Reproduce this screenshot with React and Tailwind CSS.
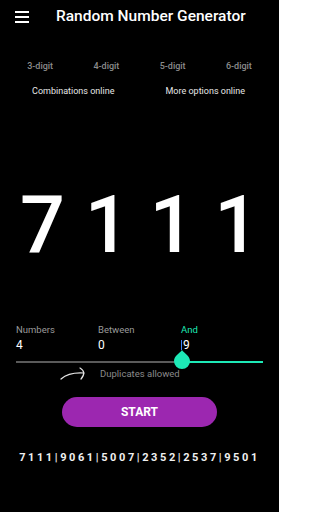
import { useState } from "react";

const tabs = ["3-digit", "4-digit", "5-digit", "6-digit"];
const history = "7111|9061|5007|2352|2537|9501";

function Burger() {
  return (
    <div className="flex w-[14px] flex-col gap-[3px]">
      <span className="h-[2px] bg-white" />
      <span className="h-[2px] bg-white" />
      <span className="h-[2px] bg-white" />
    </div>
  );
}

function Thumb() {
  return (
    <svg width="18" height="20" viewBox="0 0 18 20" className="absolute left-[157px] top-[-11px]">
      <path d="M9 0 C11 3 17 6 17 11 A8 8 0 1 1 1 11 C1 6 7 3 9 0 Z" fill="#1de9b6" />
    </svg>
  );
}

function Arrow() {
  return (
    <svg width="28" height="14" viewBox="0 0 28 14" fill="none" stroke="#e5e5e5" strokeWidth="1.2" strokeLinecap="round">
      <path d="M1 12 Q 9 5 24 6" />
      <path d="M20 1 Q 27 5 21 12" />
    </svg>
  );
}

export default function App() {
  const [digits] = useState(["7", "1", "1", "1"]);

  return (
    <div className="flex h-[512px] w-[279px] flex-col bg-black text-white" style={{ fontFamily: "Roboto, sans-serif" }}>
      <header className="flex h-[33px] items-center pl-[15px]">
        <Burger />
        <h1 className="ml-[27px] text-[15.5px] font-medium">Random Number Generator</h1>
      </header>

      <div className="mt-[27px] grid grid-cols-4 px-[7px] text-center text-[9px] font-medium text-[#8c8c8c]">
        {tabs.map((t) => (
          <span key={t}>{t}</span>
        ))}
      </div>

      <div className="mt-[11px] grid grid-cols-2 text-center text-[9px] text-[#e6e6e6]">
        <span className="pl-[7px]">Combinations online</span>
        <span className="pr-[8px]">More options online</span>
      </div>

      <div className="mt-[88px] grid grid-cols-4 px-[10px] text-center text-[79px] font-medium leading-none">
        {digits.map((d, i) => (
          <span key={i}>{d}</span>
        ))}
      </div>

      <div className="mt-[58px] grid grid-cols-[82px_83px_1fr] px-[16px] text-[9.5px] text-[#9a9a9a]">
        <span>Numbers</span>
        <span>Between</span>
        <span className="text-[#1de9b6]">And</span>
      </div>
      <div className="grid grid-cols-[82px_83px_1fr] px-[16px] text-[12px] leading-[16px] text-white">
        <span>4</span>
        <span>0</span>
        <span className="flex items-center">
          <span className="mr-[1px] h-[10px] w-[1px] bg-[#3b82f6]" />9
        </span>
      </div>

      <div className="relative mx-[16px] mt-[8px] flex h-[2px]">
        <div className="w-[166px] bg-[#5a5a5a]" />
        <div className="flex-1 bg-[#1de9b6]" />
        <Thumb />
      </div>

      <div className="mt-[4px] flex items-center pl-[60px]">
        <Arrow />
        <span className="ml-[12px] text-[9.5px] text-[#8a8a8a]">Duplicates allowed</span>
      </div>

      <div className="mt-[15px] flex justify-center">
        <button className="h-[30px] w-[155px] rounded-full bg-[#9c27b0] text-[12px] font-bold text-white">
          START
        </button>
      </div>

      <p className="mt-[23px] text-center text-[11px] font-bold tracking-[2.6px] text-[#f0f0f0]">{history}</p>
    </div>
  );
}
